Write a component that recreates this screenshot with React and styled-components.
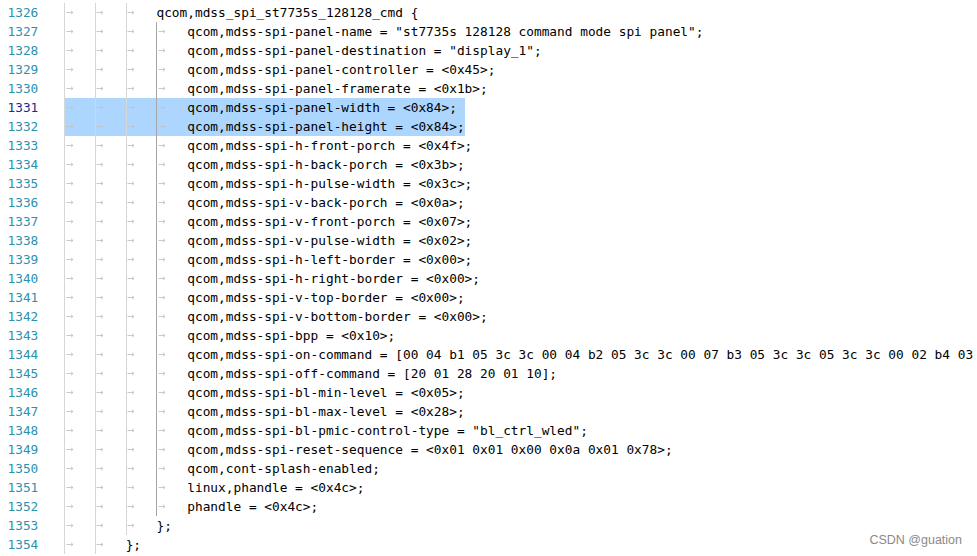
import React from 'react';
import styled, {createGlobalStyle} from "styled-components";

const Global = createGlobalStyle`
	body {
		margin: 0;
		background: #fff;
	}
`

const lines = [
	[3, 'qcom,mdss_spi_st7735s_128128_cmd {'],
	[4, 'qcom,mdss-spi-panel-name = "st7735s 128128 command mode spi panel";'],
	[4, 'qcom,mdss-spi-panel-destination = "display_1";'],
	[4, 'qcom,mdss-spi-panel-controller = <0x45>;'],
	[4, 'qcom,mdss-spi-panel-framerate = <0x1b>;'],
	[4, 'qcom,mdss-spi-panel-width = <0x84>;'],
	[4, 'qcom,mdss-spi-panel-height = <0x84>;'],
	[4, 'qcom,mdss-spi-h-front-porch = <0x4f>;'],
	[4, 'qcom,mdss-spi-h-back-porch = <0x3b>;'],
	[4, 'qcom,mdss-spi-h-pulse-width = <0x3c>;'],
	[4, 'qcom,mdss-spi-v-back-porch = <0x0a>;'],
	[4, 'qcom,mdss-spi-v-front-porch = <0x07>;'],
	[4, 'qcom,mdss-spi-v-pulse-width = <0x02>;'],
	[4, 'qcom,mdss-spi-h-left-border = <0x00>;'],
	[4, 'qcom,mdss-spi-h-right-border = <0x00>;'],
	[4, 'qcom,mdss-spi-v-top-border = <0x00>;'],
	[4, 'qcom,mdss-spi-v-bottom-border = <0x00>;'],
	[4, 'qcom,mdss-spi-bpp = <0x10>;'],
	// the rest of this line is past the right edge of the window
	[4, 'qcom,mdss-spi-on-command = [00 04 b1 05 3c 3c 00 04 b2 05 3c 3c 00 07 b3 05 3c 3c 05 3c 3c 00 02 b4 03'],
	[4, 'qcom,mdss-spi-off-command = [20 01 28 20 01 10];'],
	[4, 'qcom,mdss-spi-bl-min-level = <0x05>;'],
	[4, 'qcom,mdss-spi-bl-max-level = <0x28>;'],
	[4, 'qcom,mdss-spi-bl-pmic-control-type = "bl_ctrl_wled";'],
	[4, 'qcom,mdss-spi-reset-sequence = <0x01 0x01 0x00 0x0a 0x01 0x78>;'],
	[4, 'qcom,cont-splash-enabled;'],
	[4, 'linux,phandle = <0x4c>;'],
	[4, 'phandle = <0x4c>;'],
	[3, '};'],
	[2, '};'],
]

const FIRST = 1326
const SELECTED = [1331, 1332]
const CURRENT = 1331

function TabArrow(){
	return (
		<svg width="8" height="5" viewBox="0 0 8 5">
			<path d="M0.5 2.5H7M5 0.8L7 2.5L5 4.2" fill="none" stroke="#c4c4c4" strokeWidth="0.9"/>
		</svg>
	)
}

export default function App(){
	return (
		<Container>
		<Global/>
		<Editor>
			{lines.map(([depth, text], i) => {
				const num = FIRST + i
				const selected = SELECTED.includes(num)
				return (
					<Row key={num}>
						<LineNumber current={num === CURRENT}>{num}</LineNumber>
						<Code selected={selected}>
							{Array.from({length: depth}).map((_, t) => (
								<Tab key={t} dark={t === 3}><TabArrow/></Tab>
							))}
							<Text>{text}</Text>
						</Code>
					</Row>
				)
			})}
		</Editor>
		<Watermark>CSDN @guation</Watermark>
		</Container>
	)
}

const Container = styled.div`
	position: relative;
	width: 977px;
	height: 556px;
	overflow: hidden;
	background: #fff;
`

const Editor = styled.div`
	padding-top: 2.5px;
	font-family: "DejaVu Sans Mono", "Liberation Mono", monospace;
	font-size: 12.8px;
`

const Row = styled.div`
	display: flex;
	height: 19px;
	line-height: 19px;
	white-space: pre;
`

const LineNumber = styled.div`
	flex: 0 0 64px;
	box-sizing: border-box;
	padding-left: 7.5px;
	color: ${p => p.current ? '#25288c' : '#2b91af'};
`

const Code = styled.div`
	display: flex;
	align-items: stretch;
	color: #000;
	${p => p.selected && `
		background: #add6ff;
		width: 52ch;
	`}
`

const Tab = styled.span`
	display: inline-flex;
	align-items: center;
	width: 4ch;
	padding-left: 1.5px;
	box-sizing: border-box;
	box-shadow: inset 1px 0 0 ${p => p.dark ? '#a5a5a5' : '#d6d6d6'};
`

const Text = styled.span``

const Watermark = styled.div`
	position: absolute;
	right: 15px;
	bottom: 9px;
	font-family: "Liberation Sans", Arial, sans-serif;
	font-size: 12.5px;
	color: #8a8a8a;
`
